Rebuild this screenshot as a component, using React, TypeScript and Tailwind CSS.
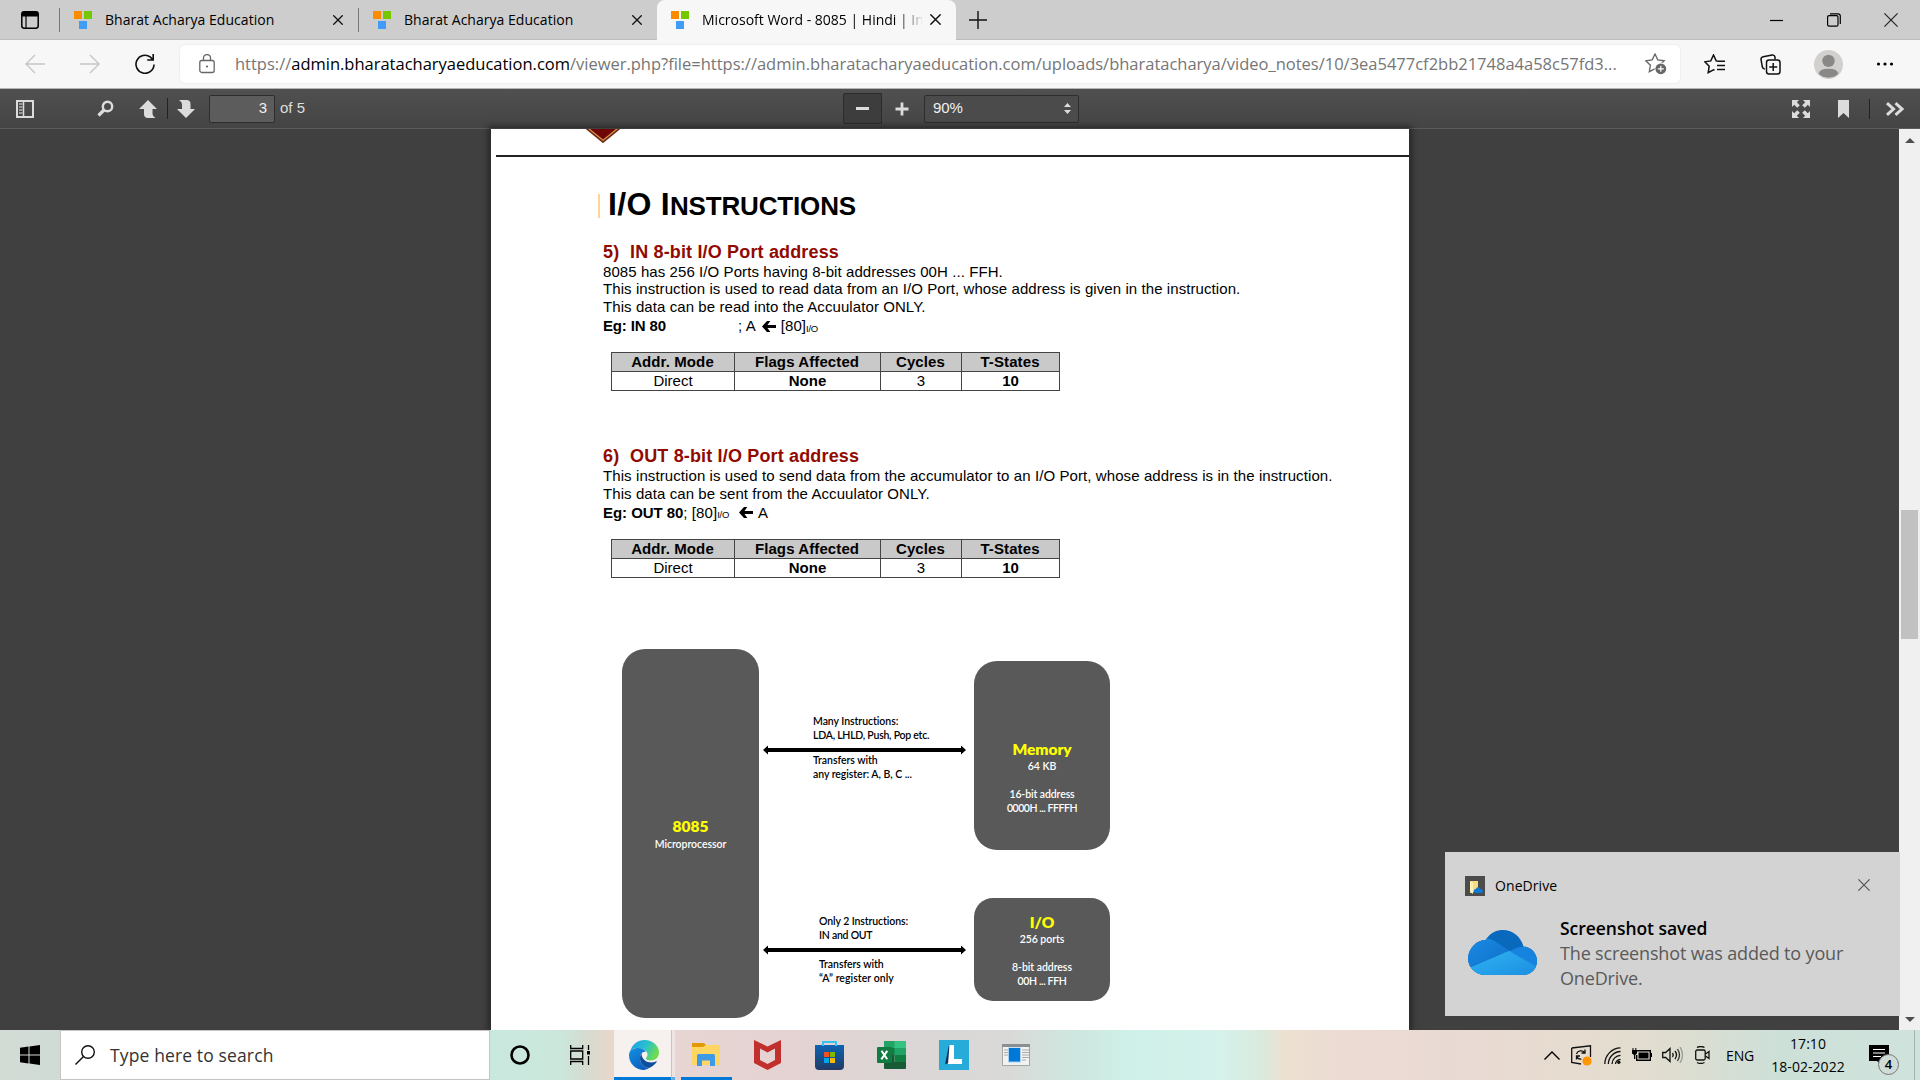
import React from "react";

function Favicon() {
  return (
    <svg className="h-[18px] w-[18px] shrink-0" viewBox="0 0 18 18">
      <rect x="0" y="0" width="8" height="8" fill="#fb8c00" />
      <rect x="10" y="0" width="8" height="8" fill="#73c800" />
      <rect x="5" y="10" width="8" height="8" fill="#409cf7" />
    </svg>
  );
}

function Cross({ size, color = "#111", w = 1.3 }: { size: number; color?: string; w?: number }) {
  return (
    <svg width={size} height={size} viewBox="0 0 10 10" className="shrink-0">
      <path d="M.3.3l9.4 9.4M9.7.3L.3 9.7" stroke={color} strokeWidth={w} fill="none" />
    </svg>
  );
}

function TabBar() {
  return (
    <div className="flex h-10 items-center border-b border-[#bdbdbd] bg-[#cdcdcd] font-['Open_Sans',sans-serif] text-[14px] text-black">
      <svg className="ml-[21px] h-[18px] w-[18px] shrink-0" viewBox="0 0 18 18">
        <rect x=".8" y=".8" width="16.4" height="16.4" rx="2.4" fill="none" stroke="#000" strokeWidth="1.5" />
        <path d="M1 2.5Q1 1 3 1h12q2 0 2 1.500V5H1z" stroke="#000" strokeWidth="1" />
        <path d="M5 5v12" stroke="#000" strokeWidth="1.200" />
      </svg>
      <div className="ml-5 h-6 w-px bg-[#777]" />
      <div className="flex w-[298px] items-center pl-[14px]">
        <Favicon />
        <span className="ml-[13px] w-[228px] whitespace-nowrap tracking-[0.03px]">Bharat Acharya Education</span>
        <Cross size={10} />
      </div>
      <div className="h-6 w-px bg-[#777]" />
      <div className="flex w-[298px] items-center pl-[14px]">
        <Favicon />
        <span className="ml-[13px] w-[228px] whitespace-nowrap tracking-[0.03px]">Bharat Acharya Education</span>
        <Cross size={10} />
      </div>
      <div className="flex h-10 w-[299px] items-center rounded-t-[8px] bg-[#f7f7f7] pl-[14px]">
        <Favicon />
        <span className="ml-[13px] w-[220px] whitespace-nowrap [mask-image:linear-gradient(90deg,#000_195px,transparent_222px)]">
          Microsoft Word - 8085 | Hindi | In
        </span>
        <span className="ml-[8px] flex">
          <Cross size={11} />
        </span>
      </div>
      <svg className="ml-[13px] h-[18px] w-[18px]" viewBox="0 0 18 18">
        <path d="M9 0v18M0 9h18" stroke="#111" strokeWidth="1.4" />
      </svg>
      <div className="mr-[22px] ml-auto flex items-center gap-[43px]">
        <svg className="h-[14px] w-[14px]" viewBox="0 0 14 14"><path d="M0 7.500h13" stroke="#000" strokeWidth="1.2" /></svg>
        <svg className="h-[14px] w-[14px]" viewBox="0 0 14 14" fill="none" stroke="#000" strokeWidth="1.2">
          <rect x=".6" y="2.600" width="10.400" height="10.600" rx="1.500" />
          <path d="M3 .8h8q2.300 0 2.300 2.300v8" />
        </svg>
        <Cross size={14} w={0.85} color="#222" />
      </div>
    </div>
  );
}

function AddressBar() {
  return (
    <div className="flex h-[49px] items-center border-b border-[#b5b5b5] bg-[#f7f7f7] font-['Open_Sans',sans-serif]">
      <svg className="ml-[25px] h-5 w-5" viewBox="0 0 20 20" fill="none" stroke="#c6c6c6" strokeWidth="1.4"><path d="M20 10H1M10 1L1 10l9 9" /></svg>
      <svg className="ml-[35px] h-5 w-5" viewBox="0 0 20 20" fill="none" stroke="#c6c6c6" strokeWidth="1.4"><path d="M0 10h19M10 1l9 9-9 9" /></svg>
      <svg className="ml-[35px] h-5 w-5" viewBox="0 0 20 20" fill="none" stroke="#111" strokeWidth="1.600"><path d="M19 10.500A9 9 0 1 1 15.500 3.200L18 6M18.200 0v6h-6" /></svg>
      <div className="ml-[25px] flex h-[38px] w-[1500px] items-center rounded-[5px] bg-white pl-[19px] shadow-[0_0_2px_rgba(0,0,0,0.12)]">
        <svg className="h-[20px] w-[16px]" viewBox="0 0 16 20" fill="none" stroke="#666" strokeWidth="1.3">
          <rect x=".8" y="6.500" width="14.400" height="12" rx="2" />
          <path d="M4.500 6.500V4a3.500 3.500 0 0 1 7 0v2.500" />
          <circle cx="8" cy="12.500" r="1" fill="#555" stroke="none" />
        </svg>
        <div className="ml-[20px] w-[1401px] whitespace-nowrap text-[16.5px] tracking-[-0.007px] text-[#767676]">
          https://<span className="text-black">admin.bharatacharyaeducation.com</span>/viewer.php?file=https://admin.bharatacharyaeducation.com/uploads/bharatacharya/video_notes/10/3ea5477cf2bb21748a4a58c57fd3...
        </div>
        <svg className="ml-[9px] h-[22px] w-[22px]" viewBox="0 0 22 22">
          <path d="M10 1l2.800 5.900 6.400.9-4.600 4.500 1.100 6.300L10 15.700l-5.700 3 1.100-6.400L.8 7.800l6.400-.9z" fill="none" stroke="#666" strokeWidth="1.3" />
          <circle cx="15.800" cy="15.800" r="6.200" fill="#fff" />
          <circle cx="15.800" cy="15.800" r="5.400" fill="#666" />
          <path d="M15.800 12.800v6M12.800 15.800h6" stroke="#fff" strokeWidth="1.2" />
        </svg>
      </div>
      <svg className="ml-[24px] h-[21px] w-[22px]" viewBox="0 0 22 21" fill="none" stroke="#111" strokeWidth="1.500">
        <path d="M14 7.200l-1.800-.3L9.500 1 6.800 6.900l-6 .9 4.400 4.400-1 6.400 5.300-2.800 1 .4M14 7.300h7M13 11.500h8M13 15.500h8" />
      </svg>
      <svg className="ml-[34px] h-[21px] w-[21px]" viewBox="0 0 21 21" fill="none" stroke="#111" strokeWidth="1.500">
        <rect x="6.500" y="6" width="13.500" height="14" rx="2.500" />
        <path d="M13.200 9v8M9.200 13h8M15 5.500V3q-.5-2.200-2.800-1.900l-9 1.600Q.7 3.300 1 5.500l1.300 7.300q.5 2 2.500 2.200" />
      </svg>
      <svg className="ml-[33px] h-[29px] w-[29px]" viewBox="0 0 28 28">
        <circle cx="14" cy="14" r="14" fill="#d2d0ce" />
        <circle cx="14" cy="10.500" r="6" fill="#8a8886" />
        <path d="M4.500 23Q5 18 14 18t9.500 5A14 14 0 0 1 4.500 23z" fill="#8a8886" />
      </svg>
      <svg className="ml-[33px] h-[4px] w-[18px]" viewBox="0 0 18 4">
        <circle cx="2.500" cy="2" r="1.600" /><circle cx="9" cy="2" r="1.600" /><circle cx="15.500" cy="2" r="1.600" />
      </svg>
    </div>
  );
}

function ViewerToolbar() {
  return (
    <div className="flex h-10 items-center border-b border-[#5c5c5c] bg-gradient-to-b from-[#505050] to-[#444] font-['Liberation_Sans',sans-serif] text-[15px] text-[#dedede]">
      <svg className="ml-[16px] h-[18px] w-[18px]" viewBox="0 0 18 18">
        <rect x="1" y="1" width="16" height="16" fill="none" stroke="#dcdcdc" strokeWidth="2" />
        <path d="M3 4h3.500M3 7h3.500M3 10h3.500M3 13h3.500" stroke="#999" strokeWidth="2" />
        <path d="M7.500 2v14" stroke="#ddd" strokeWidth="1.500" />
      </svg>
      <svg className="ml-[63px] h-[17px] w-[17px]" viewBox="0 0 17 17" fill="none" stroke="#dcdcdc">
        <circle cx="10.500" cy="6.500" r="4.700" strokeWidth="2.400" />
        <path d="M7 10l-5.500 5.500" strokeWidth="3.200" />
      </svg>
      <svg className="ml-[25px] h-[18px] w-[18px]" viewBox="0 0 18 18"><path d="M9 0l9 9h-4.500v5q0 2 3 4H9q-4 0-4-4V9H0z" fill="#dcdcdc" /></svg>
      <div className="ml-[10px] h-[21px] w-px bg-[#222]" />
      <svg className="ml-[9px] h-[18px] w-[18px]" viewBox="0 0 18 18"><path d="M9 18l9-9h-4.500V4q0-4-4-4H2q3 2 3 4v5H0z" fill="#dcdcdc" /></svg>
      <div className="ml-[14px] flex h-[28px] w-[66px] items-center justify-end rounded-[2px] border border-[#2d2d2d] bg-[#5c5c5c] pr-[7px] text-[#f0f0f0]">3</div>
      <span className="ml-[5px] w-[563px]">of 5</span>
      <div className="flex h-[31px] w-[39px] items-center justify-center rounded-l-[2px] border border-[#2c2c2c] bg-[#3d3d3d]">
        <div className="h-[3px] w-[13px] bg-[#dcdcdc]" />
      </div>
      <svg className="ml-[13px] h-[14px] w-[14px]" viewBox="0 0 14 14"><path d="M7 .5v13M.5 7h13" stroke="#dcdcdc" strokeWidth="2.800" /></svg>
      <div className="ml-[15px] flex h-[28px] w-[155px] items-center rounded-[2px] border border-[#2e2e2e] bg-[#4b4b4b] pr-[7px] pl-[8px] text-[#f0f0f0]">
        <span className="grow tracking-[-0.1px]">90%</span>
        <svg className="h-[11px] w-[7px]" viewBox="0 0 7 11"><path d="M3.500 0L7 4H0zM3.500 11L7 7H0z" fill="#ddd" /></svg>
      </div>
      <svg className="mr-[28px] ml-auto h-[18px] w-[18px]" viewBox="0 0 18 18" fill="#dcdcdc">
        <path d="M0 0h7L4.800 2.200l3 3-2.600 2.600-3-3L0 7zM18 0v7l-2.200-2.200-3 3-2.600-2.600 3-3L11 0zM0 18v-7l2.200 2.200 3-3 2.600 2.600-3 3L7 18zM18 18h-7l2.200-2.200-3-3 2.600-2.600 3 3L18 11z" />
      </svg>
      <svg className="mr-[20px] h-[18px] w-[11px]" viewBox="0 0 11 18"><path d="M0 0h11v18l-5.500-5L0 18z" fill="#dcdcdc" /></svg>
      <div className="h-[20px] w-px bg-[#222]" />
      <svg className="mr-[16px] ml-[16px] h-[14px] w-[18px]" viewBox="0 0 18 14" fill="none" stroke="#dcdcdc" strokeWidth="3"><path d="M1 1.200l6.500 5.800L1 12.800M9.500 1.200L16 7l-6.500 5.800" /></svg>
    </div>
  );
}

function FlagsTable() {
  return (
    <table className="mt-[16px] ml-[8px] w-[448px] table-fixed border-collapse text-center text-[15px] leading-[18px] tracking-normal">
      <colgroup>
        <col className="w-[123px]" />
        <col className="w-[146px]" />
        <col className="w-[81px]" />
        <col className="w-[98px]" />
      </colgroup>
      <thead>
        <tr className="h-[19px] bg-[#c9c9c9] tracking-[0.1px]">
          {["Addr. Mode", "Flags Affected", "Cycles", "T-States"].map((h) => (
            <th key={h} className="border border-[#444] p-0 pr-px font-bold">{h}</th>
          ))}
        </tr>
      </thead>
      <tbody>
        <tr className="h-[19px]">
          <td className="border border-[#444] p-0">Direct</td>
          <td className="border border-[#444] p-0 font-bold">None</td>
          <td className="border border-[#444] p-0">3</td>
          <td className="border border-[#444] p-0 font-bold">10</td>
        </tr>
      </tbody>
    </table>
  );
}

function LeftArrow({ className }: { className: string }) {
  return (
    <svg className={"inline-block h-[11px] w-[14px] " + className} viewBox="0 0 14 11">
      <path d="M0 5.500L5 0h3.300L5.500 4H14v3H5.500l2.800 4H5z" />
    </svg>
  );
}

function BusArrow({ className }: { className: string }) {
  return (
    <svg className={"absolute h-[10px] w-[203px] " + className} viewBox="0 0 203 10">
      <path d="M0 5l5-4.500V3h193V.5L203 5l-5 4.500V7H5v2.500z" />
    </svg>
  );
}

function Diagram() {
  return (
    <div className="relative mt-[71px] -ml-[3px] h-[381px] w-[540px] font-['Lato',sans-serif] text-[10.5px] leading-[14px] font-semibold tracking-[-0.050px]">
      <div className="absolute top-0 left-[22px] flex h-[369px] w-[137px] flex-col items-center rounded-[23px] bg-[#595959] pt-[168px] text-white">
        <b className="text-[15.5px] leading-[18px] font-extrabold text-[#ff0]">8085</b>
        <span className="mt-[2px]">Microprocessor</span>
      </div>
      <div className="absolute top-[12px] left-[374px] flex h-[189px] w-[136px] flex-col items-center rounded-[23px] bg-[#595959] pt-[79px] text-white">
        <b className="text-[15.5px] leading-[18px] font-extrabold text-[#ff0]">Memory</b>
        <span className="mt-[1px]">64 KB</span>
        <span className="mt-[14px] tracking-[-0.1px]">16-bit address</span>
        <span className="tracking-[-0.45px]">0000H ... FFFFH</span>
      </div>
      <div className="absolute top-[249px] left-[374px] flex h-[103px] w-[136px] flex-col items-center rounded-[19px] bg-[#595959] pt-[15px] text-white">
        <b className="text-[15.5px] leading-[18px] font-extrabold text-[#ff0]">I/O</b>
        <span className="mt-[1px]">256 ports</span>
        <span className="mt-[14px] tracking-[-0.050px]">8-bit address</span>
        <span className="tracking-[-0.35px]">00H ... FFH</span>
      </div>
      <div className="absolute top-[65px] left-[213px] whitespace-nowrap">Many Instructions:<br /><span className="tracking-[-0.25px]">LDA, LHLD, Push, Pop etc.</span></div>
      <BusArrow className="top-[96px] left-[163px]" />
      <div className="absolute top-[104px] left-[213px] whitespace-nowrap">Transfers with<br /><span className="tracking-[-0.050px]">any register: A, B, C ...</span></div>
      <div className="absolute top-[265px] left-[219px] whitespace-nowrap tracking-[-0.1px]">Only 2 Instructions:<br /><span className="tracking-[-0.25px]">IN and OUT</span></div>
      <BusArrow className="top-[296px] left-[163px]" />
      <div className="absolute top-[308px] left-[219px] whitespace-nowrap">Transfers with<br /><span className="tracking-[0.050px]">“A” register only</span></div>
    </div>
  );
}

function DocumentPage() {
  return (
    <div className="h-[901px] w-[918px] shrink-0 overflow-hidden bg-white font-['Liberation_Sans',sans-serif] text-[15px] tracking-[0.08px] whitespace-nowrap text-black shadow-[0_0_6px_3px_rgba(0,0,0,0.4)]">
      <svg className="ml-[90px] h-[14px] w-[44px]" viewBox="0 0 44 14" fill="none">
        <path d="M-3-8L22 12.500 47-8z" fill="#700505" stroke="#6b2a1a" strokeWidth="2.600" />
        <path d="M-3-9L22 11.300 47-9" stroke="#d9954a" strokeWidth="1.200" />
      </svg>
      <div className="mt-[12px] ml-[5px] h-[2px] bg-[#222]" />
      <div className="ml-[112px]">
        <div className="mt-[37px] -ml-[5px] flex h-[24px] items-center border-l-2 border-[#ffd591] pl-[8px]">
          <h1 className="-mt-[3px] text-[32px] leading-[40px] font-bold tracking-[0.3px]">I/O I<span className="text-[26px] tracking-[-0.16px]">NSTRUCTIONS</span></h1>
        </div>
        <h2 className="mt-[24px] flex h-[20px] items-center text-[18px] font-bold tracking-[0.16px] text-[#910a00]"><span className="w-[27px]">5)</span>IN 8-bit I/O Port address</h2>
        <p className="mt-[1px] h-[17px] leading-[18px]">8085 has 256 I/O Ports having 8-bit addresses 00H ... FFH.</p>
        <p className="h-[18px] leading-[18px]">This instruction is used to read data from an I/O Port, whose address is given in the instruction.</p>
        <p className="h-[18px] leading-[18px]">This data can be read into the Accuulator ONLY.</p>
        <p className="flex h-[20px] items-center leading-[18px]">
          <b className="w-[135px] tracking-[-0.150px]">Eg: IN 80</b>; A <LeftArrow className="mr-[5px] ml-[6px]" /> [80]<span className="mt-[5px] text-[9.500px] tracking-[-0.300px]">I/O</span>
        </p>
        <FlagsTable />
        <h2 className="mt-[55px] flex h-[20px] items-center text-[18px] font-bold tracking-[0.16px] text-[#910a00]"><span className="w-[27px]">6)</span>OUT 8-bit I/O Port address</h2>
        <p className="mt-[1px] h-[18px] leading-[18px] tracking-[0.09px]">This instruction is used to send data from the accumulator to an I/O Port, whose address is in the instruction.</p>
        <p className="h-[18px] leading-[18px]">This data can be sent from the Accuulator ONLY.</p>
        <p className="mb-[17px] flex h-[19px] items-center leading-[18px]">
          <b className="tracking-[-0.050px]">Eg: OUT 80</b>;&nbsp;[80]<span className="mt-[5px] text-[9.500px] tracking-[-0.300px]">I/O</span><LeftArrow className="mr-[5px] ml-[10px]" /> A
        </p>
        <FlagsTable />
        <Diagram />
      </div>
    </div>
  );
}

function Scrollbar() {
  return (
    <div className="ml-auto flex h-full w-[21px] flex-col items-center bg-[#f0f0f0]">
      <svg className="mt-[9px] h-[5px] w-[10px]" viewBox="0 0 10 5"><path d="M5 0l5 5H0z" fill="#505050" /></svg>
      <div className="mt-[367px] h-[129px] w-[17px] bg-[#c1c1c1]" />
      <svg className="mt-auto mb-[8px] h-[5px] w-[10px]" viewBox="0 0 10 5"><path d="M5 5l5-5H0z" fill="#505050" /></svg>
    </div>
  );
}

function Toast() {
  return (
    <div className="absolute top-[852px] left-[1445px] h-[164px] w-[455px] bg-[#d3d3d3] px-[20px] pt-[24px] font-['Open_Sans',sans-serif]">
      <div className="flex items-center">
        <svg className="h-5 w-5" viewBox="0 0 20 20">
          <rect width="20" height="20" fill="#4b4b4b" />
          <path d="M5 5h8v11H8l-3 1z" fill="#f8dc80" />
          <path d="M5 5l3 2v11l-3-2z" fill="#fff0b8" />
          <path d="M11 17q-2.500 0-2.300-2.300.2-1.700 2-1.800Q12 10.500 14 11.500q1.300.6 1.600 1.800 2.400 0 2.400 1.900T16 17z" fill="#0f78d4" />
        </svg>
        <span className="ml-[10px] text-[14px] leading-5 tracking-[0.080px]">OneDrive</span>
        <span className="mr-[10px] ml-auto -mt-[3px]"><Cross size={12} color="#555" w={1} /></span>
      </div>
      <div className="mt-[20px] flex">
        <svg className="mt-[14px] ml-[3px] h-[47px] w-[69px]" viewBox="0 0 69 47">
          <defs>
            <clipPath id="cloud"><path d="M16 45A17 17 0 0 1 0 29C0 18 9 10 17.500 10 23 2 29 0 35 0c10 0 18 7 20.500 16.500C63 17 69 23 69 31c0 8-6 14-14 14z" /></clipPath>
            <linearGradient id="cl" x1="0" y1="0" x2="1" y2="1"><stop offset="0" stopColor="#1a8be2" /><stop offset="1" stopColor="#0f6fcb" /></linearGradient>
            <linearGradient id="cb" x1="0" y1="0" x2="1" y2="1"><stop offset="0" stopColor="#2fb4f2" /><stop offset="1" stopColor="#1b8de0" /></linearGradient>
          </defs>
          <g clipPath="url(#cloud)">
            <rect width="69" height="47" fill="#0869bd" />
            <path d="M0 8h17q8 1 14 6l10 6.500L0 38z" fill="url(#cl)" />
            <path d="M41 21l10-4q10-2 18 4v18z" fill="#1683de" />
            <path d="M2 37.500l39-16.700 27 15.700V47H5z" fill="url(#cb)" />
          </g>
        </svg>
        <div className="ml-[23px] text-[18px] leading-[25px] tracking-[-0.16px] text-[#5a5a5a]">
          <div className="text-[17.500px] font-semibold tracking-[-0.040px] text-black">Screenshot saved</div>
          The screenshot was added to your<br />OneDrive.
        </div>
      </div>
    </div>
  );
}

function TaskbarApps() {
  return (
    <div className="flex h-[50px]">
      <div className="flex w-[50px] items-center justify-center">
        <svg className="h-5 w-5" viewBox="0 0 20 20"><circle cx="10" cy="10" r="8.500" fill="none" stroke="#000" strokeWidth="2.600" /></svg>
      </div>
      <div className="ml-[25px] flex w-[44px] items-center">
        <svg className="h-[20px] w-[20px]" viewBox="0 0 20 20" fill="none" stroke="#000" strokeWidth="1.300">
          <path d="M.7 0v3.500h12V0M.7 20v-3.500h12V20M.7 6h12v8H.7zM18.500 0v5M18.500 11v9" />
          <path d="M17 6h3v3.500h-3z" fill="#000" stroke="none" />
        </svg>
      </div>
      <div className="flex w-[57px] items-center justify-center border-b-[3px] border-[#0078d7] bg-[#f6f0ee] pt-[2px] pl-[2px]">
        <svg className="h-[30px] w-[30px]" viewBox="0 0 30 30">
          <defs>
            <linearGradient id="e1" x1="0" y1="0" x2="1" y2=".4"><stop offset=".2" stopColor="#1fa8e4" /><stop offset=".6" stopColor="#2cc3c8" /><stop offset="1" stopColor="#6cdc50" /></linearGradient>
            <linearGradient id="e2" x1="0" y1="0" x2=".6" y2="1"><stop offset="0" stopColor="#1392e0" /><stop offset="1" stopColor="#0a5fc0" /></linearGradient>
          </defs>
          <path d="M1 12C3 4 9 0 15.500 0 24 0 30 6 30 12.500c0 5-4 8-8.500 8-3 0-4.500-1-4.500-2s1.500-1.500 1.500-4C18.500 11 14 8 9 8 5 8 2 10 1 12z" fill="url(#e1)" />
          <path d="M0 15C0 10 5 8 9 8c4 0 7 2 8 4-3-1-6 2-6 6.500C11 24 15.500 28 20 28c-2 1.500-4.500 2-6 2C6 29.500 0 23 0 15z" fill="url(#e2)" />
          <path d="M12.500 13.500c-1 1-1.500 3-1.500 5C11 24 15.500 28 20 28c3-1 6-3.500 7.800-6.200.3-.5-.2-.8-.6-.5-3 1.700-8 1.700-11.200-.8-2.500-2-3.500-4.500-3.500-7z" fill="#0c4f9e" />
        </svg>
      </div>
      <div className="w-[4px] border-b-[3px] border-l border-b-[#5fa8e2] border-l-[#cfbfbd] bg-[#efe4e3]" />
      <div className="ml-[6px] flex w-[51px] items-center justify-center border-b-[3px] border-[#0078d7] pt-[1px] pr-[2px]">
        <svg className="h-[24px] w-[28px]" viewBox="0 0 28 24">
          <path d="M0 1h12l2 2v6H0z" fill="#e19a06" />
          <path d="M0 5h11l3-2h14v20H0z" fill="#ffd664" />
          <path d="M5 24V13.500Q5 12 6.500 12h15q1.500 0 1.500 1.500V24h-5v-5.500h-8V24z" fill="#3e9ae6" />
        </svg>
      </div>
      <div className="ml-[22px] flex items-center">
        <svg className="h-[30px] w-[27px]" viewBox="0 0 27 30"><path d="M0 0l13.500 6.500L27 0v23l-13.500 7L0 23zM6 8.500V20l7.500 4 7.500-4V8.500l-7.500 4z" fill="#c1302d" fillRule="evenodd" /></svg>
        <svg className="ml-[34px] h-[30px] w-[29px]" viewBox="0 0 29 30">
          <defs><linearGradient id="st" x1="0" y1="0" x2="0" y2="1"><stop offset="0" stopColor="#0c64b4" /><stop offset="1" stopColor="#213a66" /></linearGradient></defs>
          <path d="M0 5h29v21q0 4-4 4H4q-4 0-4-4z" fill="url(#st)" />
          <path d="M8 6V2h13v4" fill="none" stroke="#35c1f1" strokeWidth="2" />
          <path d="M9 12h5v5H9z" fill="#f25022" /><path d="M15 12h5v5h-5z" fill="#7fba00" /><path d="M9 18h5v5H9z" fill="#00a4ef" /><path d="M15 18h5v5h-5z" fill="#ffb900" />
        </svg>
        <svg className="ml-[33px] h-[28px] w-[29px]" viewBox="0 0 29 28">
          <path d="M7 0h11v14H7z" fill="#21a366" /><path d="M17.500 0H29v7H17.500z" fill="#33c481" /><path d="M17.500 7H29v7H17.500z" fill="#21a366" /><path d="M7 14h10.500v7H7z" fill="#185c37" /><path d="M17.500 14H29v7H17.500z" fill="#107c41" /><path d="M7 21h22v6q0 1-1 1H8q-1 0-1-1z" fill="#185c37" /><path d="M7 7h10.500v7H7z" fill="#107c41" />
          <rect y="6" width="15" height="16" rx="1" fill="#107c41" />
          <path d="M4.500 9.800l5.700 8.500M10.300 9.800l-6 8.500" stroke="#fff" strokeWidth="2" />
        </svg>
        <svg className="ml-[33px] h-[30px] w-[30px]" viewBox="0 0 30 30">
          <rect width="30" height="30" fill="#27abd8" /><path d="M10 5L6 24.500 15 20z" fill="#0d2f5c" /><path d="M10.500 5h4.500v14h8v5H9z" fill="#fff" />
        </svg>
        <svg className="ml-[33px] h-[22px] w-[28px]" viewBox="0 0 28 22">
          <path d="M.5.5h27v21H.5z" fill="#f2f2f2" stroke="#a5a5a5" /><path d="M0 0h28v3H0z" fill="#8a8f94" />
          <path d="M6 3.500h13v15H6z" fill="#a8d0f0" /><path d="M7 4h11v13.500H7z" fill="#0078d7" />
          <path d="M2 6h4M2 8.500h4M2 11h4M20 6h7M20 8.500h7M20 11h7M20 13.500h7M20 16h4" stroke="#aaa" />
        </svg>
      </div>
    </div>
  );
}

function Tray() {
  return (
    <div className="ml-auto flex h-[50px] items-center font-['Open_Sans',sans-serif] text-[14px] text-black">
      <svg className="h-[9px] w-[16px]" viewBox="0 0 16 9"><path d="M.5 8.500L8 1l7.500 7.500" fill="none" stroke="#000" strokeWidth="1.400" /></svg>
      <svg className="ml-[11px] h-[21px] w-[21px]" viewBox="0 0 21 21" fill="none" stroke="#111" strokeWidth="1.300">
        <path d="M.7 3L19.500.8V12M10 19L.7 17.500V3M5.500 9a4.500 4 0 0 1 8-1.500M14 4.500v3.500h-3.500M5.500 14.500V11H9M5.800 11.500q1 3 4.500 2.500" />
        <circle cx="16" cy="16" r="4.600" fill="#ff9500" stroke="none" />
      </svg>
      <svg className="ml-[12px] h-[17px] w-[17px]" viewBox="0 0 17 17" fill="none" stroke="#111" strokeWidth="1.300">
        <path d="M.8 17C1 8 8 1 16.500.8M4.300 17C4.500 10 10 4.700 16.500 4.500M8 17c.2-5 4-8.500 8.500-8.700M11.500 17q.3-4 5-4.700" /><circle cx="14.800" cy="15.200" r="1.700" fill="#111" stroke="none" />
      </svg>
      <svg className="ml-[11px] h-[14px] w-[20px]" viewBox="0 0 20 14">
        <path d="M4.700 2.700h13.600v9.600H4.700V7M19.300 5v4" fill="none" stroke="#000" strokeWidth="1.400" /><path d="M6.500 4.500h10v6h-10zM0 2h5v3.500L3.300 7v4H2V7L0 5.500zM.5 0h1v2h-1zM3.300 0h1v2h-1z" />
      </svg>
      <svg className="ml-[10px] h-[16px] w-[21px]" viewBox="0 0 21 16" fill="none" stroke="#111" strokeWidth="1.300">
        <path d="M.7 5.500h3L8 1.500v13l-4.300-4h-3zM10.500 6q1.500 2 0 4M13 4q3 4 0 8" /><path d="M15.500 2q4 6 0 12" stroke="#333" /><path d="M18 0q5 8 0 16" stroke="#999" />
      </svg>
      <svg className="ml-[12px] h-[18px] w-[15px]" viewBox="0 0 15 18" fill="none" stroke="#111" strokeWidth="1.300">
        <rect x=".7" y="4" width="9.500" height="10" rx="1.500" /><path d="M10.500 8l3.500-2.500v7L10.500 10M2 1.500Q5.500-.5 9.500 1.500M2 16.500q3.500 2 7.500 0" />
      </svg>
      <span className="ml-[16px] w-[29px] tracking-[-0.100px]">ENG</span>
      <div className="ml-[13px] w-[80px] text-center leading-[23px] tracking-[0.050px]">17:10<br />18-02-2022</div>
      <div className="relative ml-[21px] h-[20px] w-[20px]">
        <svg className="h-5 w-5" viewBox="0 0 20 20"><path d="M0 0h20v16h-8v4l-4-4H0z" /><path d="M4 4.500h12M4 8h12M4 11.500h8" stroke="#fff" strokeWidth="1.200" /></svg>
        <div className="absolute top-[9px] left-[9px] flex h-[21px] w-[21px] items-center justify-center rounded-full border border-[#777] bg-[#cfdcd8] text-[13px] font-semibold">4</div>
      </div>
      <div className="ml-[25px] h-full w-[6px] border-l border-[#a5b5b0]" />
    </div>
  );
}

function Taskbar() {
  return (
    <div className="flex h-[50px] bg-[linear-gradient(90deg,#d3dbd5_0px,#d0dbd5_60px,#c9e8dd_490px,#cbe7dc_560px,#d5dcd1_585px,#e8d7cb_610px,#e6d5d3_690px,#e4d3d2_800px,#dbd6d5_900px,#d9dad8_1010px,#cee6df_1070px,#cef0e8_1130px,#d5f2eb_1220px,#dae9dc_1262px,#ede0d0_1287px,#ecdcd4_1330px,#e9d9d3_1450px,#e6dccf_1580px,#dfddd0_1670px,#cde0d8_1780px,#cfe3dc_1920px)]">
      <div className="flex w-[60px] items-center justify-center">
        <svg className="h-5 w-5" viewBox="0 0 20 20"><path d="M0 2.800L8.500 1.600V9.500H0zM9.500 1.500L20 0v9.500H9.500zM0 10.500h8.500v8L0 17.300zM9.500 10.500H20V20L9.500 18.600z" /></svg>
      </div>
      <div className="flex w-[430px] items-center border border-[#c4c4c4] bg-white pl-[14px]">
        <svg className="h-5 w-5" viewBox="0 0 20 20" fill="none" stroke="#111" strokeWidth="1.400"><circle cx="13" cy="7" r="6.300" /><path d="M8.500 11.500L.5 19.500" /></svg>
        <span className="ml-[15px] font-['Open_Sans',sans-serif] text-[17.500px] tracking-[0.130px] text-[#333]">Type here to search</span>
      </div>
      <div className="ml-[5px]"><TaskbarApps /></div>
      <Tray />
    </div>
  );
}

export default function App() {
  return (
    <div className="relative flex h-[1080px] w-[1920px] flex-col overflow-hidden bg-[#404040]">
      <TabBar />
      <AddressBar />
      <ViewerToolbar />
      <div className="flex h-[901px] bg-[#404040] pl-[491px]">
        <DocumentPage />
        <Scrollbar />
      </div>
      <Taskbar />
      <Toast />
    </div>
  );
}
